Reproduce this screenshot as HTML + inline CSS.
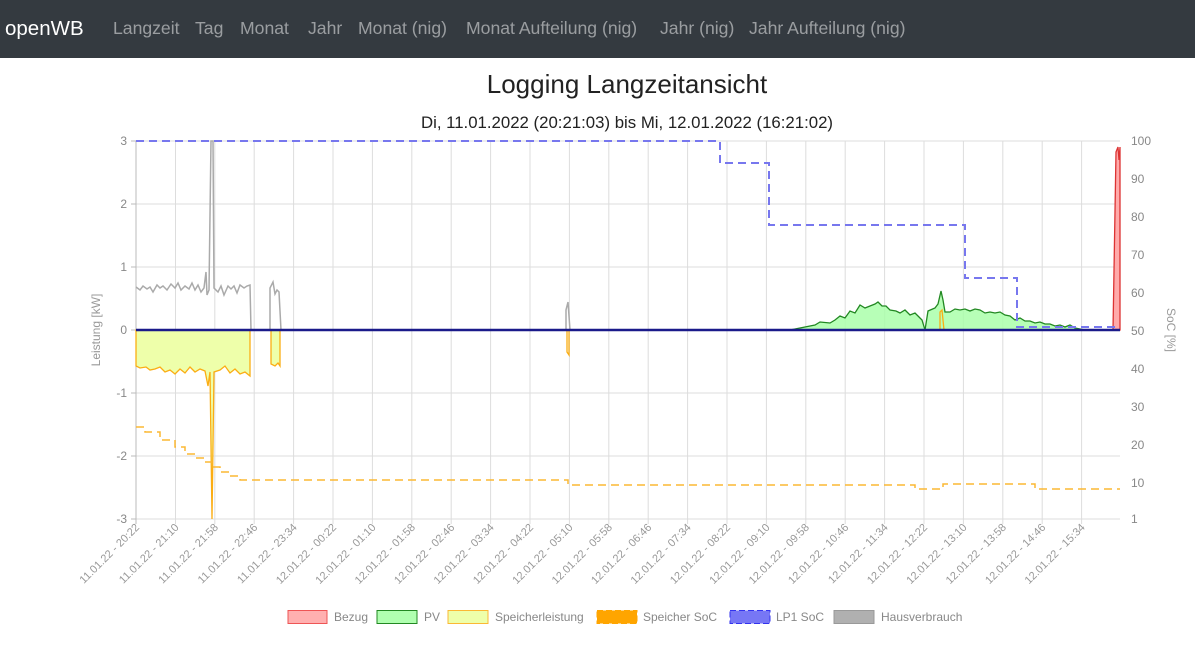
<!DOCTYPE html>
<html><head><meta charset="utf-8"><style>
body{margin:0;width:1195px;height:670px;background:#fff;font-family:"Liberation Sans",sans-serif;overflow:hidden}
.nav{height:58px;background:#343a40;position:relative}
.nav span{position:absolute;top:18px;font-size:17.6px;color:rgba(255,255,255,.5);white-space:nowrap}
.nav .brand{color:#fff;font-size:20.5px;top:17px;left:5px}
svg{position:absolute;left:0;top:0}
</style></head><body>
<div class="nav"><span class="brand">openWB</span><span style="left:113px">Langzeit</span><span style="left:195px">Tag</span><span style="left:240px">Monat</span><span style="left:308px">Jahr</span><span style="left:358px">Monat (nig)</span><span style="left:466px">Monat Aufteilung (nig)</span><span style="left:660px">Jahr (nig)</span><span style="left:749px">Jahr Aufteilung (nig)</span></div>
<svg width="1195" height="670" font-family="Liberation Sans, sans-serif">
<text x="627" y="93" font-size="26" text-anchor="middle" fill="#222">Logging Langzeitansicht</text>
<text x="627" y="128" font-size="16.8" text-anchor="middle" fill="#222">Di, 11.01.2022 (20:21:03) bis Mi, 12.01.2022 (16:21:02)</text>
<g stroke="#ddd" stroke-width="1">
<path d="M136 141H1120M136 204H1120M136 267H1120M136 393H1120M136 456H1120M136 519H1120"/>
<path d="M175.5 141V524M214.8 141V524M254.2 141V524M293.6 141V524M333 141V524M372.4 141V524M411.8 141V524M451.2 141V524M490.6 141V524M530 141V524M569.4 141V524M608.8 141V524M648.2 141V524M687.6 141V524M727 141V524M766.4 141V524M805.8 141V524M845.2 141V524M884.6 141V524M924 141V524M963.4 141V524M1002.8 141V524M1042.2 141V524M1081.6 141V524"/>
</g>
<path d="M136 141V524M131 141H136M131 204H136M131 267H136M131 330H136M131 393H136M131 456H136M131 519H136" stroke="#bbb"/>
<g font-size="12" fill="#888" text-anchor="end">
<text x="127" y="145">3</text><text x="127" y="208">2</text><text x="127" y="271">1</text><text x="127" y="334">0</text><text x="127" y="397">-1</text><text x="127" y="460">-2</text><text x="127" y="523">-3</text>
</g>
<g font-size="12" fill="#888">
<text x="1131" y="145">100</text><text x="1131" y="183">90</text><text x="1131" y="221">80</text><text x="1131" y="259">70</text><text x="1131" y="297">60</text><text x="1131" y="335">50</text><text x="1131" y="373">40</text><text x="1131" y="411">30</text><text x="1131" y="449">20</text><text x="1131" y="487">10</text><text x="1131" y="523">1</text>
</g>
<text transform="translate(100,330) rotate(-90)" font-size="12" fill="#999" text-anchor="middle">Leistung [kW]</text>
<text transform="translate(1167,330) rotate(90)" font-size="12" fill="#999" text-anchor="middle">SoC [%]</text>
<path d="M136 330V366L140 368 146 367 150 370 155 369 160 367 165 372 170 370 175 374 180 369 185 373 190 367 195 372 200 369 205 371 208 386 210 372 212 519 214 372 220 370 225 366 230 373 235 369 240 374 245 372 250 376V330Z" fill="#eeffaa" stroke="#fbad13" stroke-width="1.3"/>
<path d="M271 330V364L275 366 278 363 280 366V330Z" fill="#eeffaa" stroke="#fbad13" stroke-width="1.3"/>
<path d="M567 330V352L569 355V330" fill="none" stroke="#fbad13" stroke-width="1.3"/>
<path d="M136 287L140 290 143 286 147 289 150 287 153 292 157 285 160 288 163 286 167 290 171 284 175 288 178 283 181 290 185 286 189 289 192 283 195 290 198 285 201 292 204 288 206 272 207 295 209 290 211 141 213 141 214 288 218 292 221 286 224 295 228 286 231 289 234 286 237 293 240 285 244 288 247 286 250 285 251 330" fill="none" stroke="#aaa" stroke-width="1.5"/>
<path d="M270 330V288L273 282 275 294 277 290 279 292 281 330" fill="none" stroke="#aaa" stroke-width="1.5"/>
<path d="M566 330V310L568 302 570 330" fill="none" stroke="#aaa" stroke-width="1.5"/>
<path d="M790 330L800 328 810 326 815 325 820 322 830 323 835 320 840 316 845 318 850 311 855 313 860 305 865 308 870 306 875 304 878 302 882 306 886 306 890 310 896 311 900 313 905 310 910 315 915 313 918 316 922 320 925 330 928 311 935 308 938 304 941 291 943 300 945 312 950 312 955 309 960 310 965 309 970 311 975 309 980 310 985 313 990 312 995 313 1000 312 1005 315 1010 316 1015 320 1020 318 1025 321 1030 321 1035 323 1040 322 1045 324 1050 324 1055 326 1060 325 1065 327 1070 325 1075 328 1080 329 1085 330Z" fill="#aaffaa" fill-opacity=".85" stroke="#228822" stroke-width="1.3"/>
<path d="M940 330V312L942 310 944 330" fill="none" stroke="#fbad13" stroke-width="1.3"/>
<path d="M1113 330L1116 152 1118 147 1119 160 1120 147 1120 330Z" fill="#ffaaaa" stroke="#dd3333" stroke-width="1.3"/>
<path d="M136 330H1120" stroke="#1a1a8a" stroke-width="2.5"/>
<path d="M136 427H145V432H160V440H175V447H185V454H195V458H205V462H212V467H220V472H230V476H240V480H568V485H915V489H943V484H1035V489H1120" fill="none" stroke="#fbb834" stroke-width="1.5" stroke-dasharray="8 5"/>
<path d="M136 141H720V163H769V225H965V278H1017V327H1120" fill="none" stroke="#7777ee" stroke-width="2" stroke-dasharray="8 5"/>
<g font-size="11" fill="#999" text-anchor="end">
<text transform="translate(140,528) rotate(-45)">11.01.22 - 20:22</text>
<text transform="translate(179.5,528) rotate(-45)">11.01.22 - 21:10</text>
<text transform="translate(218.8,528) rotate(-45)">11.01.22 - 21:58</text>
<text transform="translate(258.2,528) rotate(-45)">11.01.22 - 22:46</text>
<text transform="translate(297.6,528) rotate(-45)">11.01.22 - 23:34</text>
<text transform="translate(337,528) rotate(-45)">12.01.22 - 00:22</text>
<text transform="translate(376.4,528) rotate(-45)">12.01.22 - 01:10</text>
<text transform="translate(415.8,528) rotate(-45)">12.01.22 - 01:58</text>
<text transform="translate(455.2,528) rotate(-45)">12.01.22 - 02:46</text>
<text transform="translate(494.6,528) rotate(-45)">12.01.22 - 03:34</text>
<text transform="translate(534,528) rotate(-45)">12.01.22 - 04:22</text>
<text transform="translate(573.4,528) rotate(-45)">12.01.22 - 05:10</text>
<text transform="translate(612.8,528) rotate(-45)">12.01.22 - 05:58</text>
<text transform="translate(652.2,528) rotate(-45)">12.01.22 - 06:46</text>
<text transform="translate(691.6,528) rotate(-45)">12.01.22 - 07:34</text>
<text transform="translate(731,528) rotate(-45)">12.01.22 - 08:22</text>
<text transform="translate(770.4,528) rotate(-45)">12.01.22 - 09:10</text>
<text transform="translate(809.8,528) rotate(-45)">12.01.22 - 09:58</text>
<text transform="translate(849.2,528) rotate(-45)">12.01.22 - 10:46</text>
<text transform="translate(888.6,528) rotate(-45)">12.01.22 - 11:34</text>
<text transform="translate(928,528) rotate(-45)">12.01.22 - 12:22</text>
<text transform="translate(967.4,528) rotate(-45)">12.01.22 - 13:10</text>
<text transform="translate(1006.8,528) rotate(-45)">12.01.22 - 13:58</text>
<text transform="translate(1046.2,528) rotate(-45)">12.01.22 - 14:46</text>
<text transform="translate(1085.6,528) rotate(-45)">12.01.22 - 15:34</text>
</g>
<g font-size="12" fill="#888">
<rect x="288" y="610.5" width="39" height="13" fill="#ffb0b0" stroke="#ee5555"/><text x="334" y="621">Bezug</text>
<rect x="377" y="610.5" width="40" height="13" fill="#b0ffb0" stroke="#228822"/><text x="424" y="621">PV</text>
<rect x="448" y="610.5" width="40" height="13" fill="#eeffaa" stroke="#fbb834"/><text x="495" y="621">Speicherleistung</text>
<rect x="597" y="610.5" width="40" height="13" fill="#ffa500" stroke="#ffa500" stroke-dasharray="6 3"/><text x="643" y="621">Speicher SoC</text>
<rect x="730" y="610.5" width="40" height="13" fill="#7777f5" stroke="#3333ee" stroke-dasharray="6 3"/><text x="776" y="621">LP1 SoC</text>
<rect x="834" y="610.5" width="40" height="13" fill="#b0b0b0" stroke="#999"/><text x="881" y="621">Hausverbrauch</text>
</g>
</svg>
</body></html>
